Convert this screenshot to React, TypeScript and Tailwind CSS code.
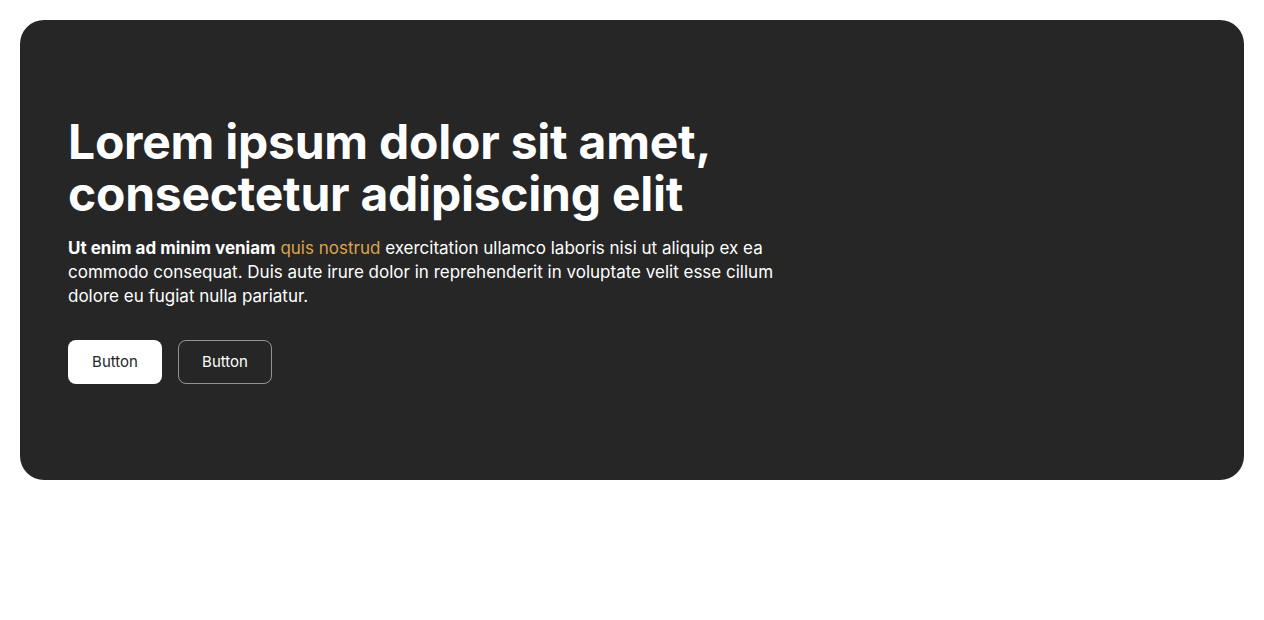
export default function App() {
  return (
    <div className="p-5 bg-white" style={{ fontFamily: "Inter, 'Noto Sans', sans-serif" }}>
      <div className="rounded-3xl bg-[#262626] px-12 py-24 h-[460px]">
        <h1 className="text-[48px] leading-[52px] font-bold text-white tracking-[-0.005em]">
          Lorem ipsum dolor sit amet,
          <br />
          consectetur adipiscing elit
        </h1>
        <p className="mt-4 max-w-[720px] text-[17px] leading-6 text-white">
          <strong className="font-bold">Ut enim ad minim veniam</strong>{" "}
          <span className="text-[#dba44f]">quis nostrud</span> exercitation ullamco laboris nisi ut aliquip ex ea
          commodo consequat. Duis aute irure dolor in reprehenderit in voluptate velit esse cillum dolore eu
          fugiat nulla pariatur.
        </p>
        <div className="mt-8 flex gap-4">
          <button className="h-11 w-[94px] rounded-lg bg-white text-[15px] text-[#262626]">Button</button>
          <button className="h-11 w-[94px] rounded-lg border border-white/50 text-[15px] text-white">Button</button>
        </div>
      </div>
    </div>
  );
}
